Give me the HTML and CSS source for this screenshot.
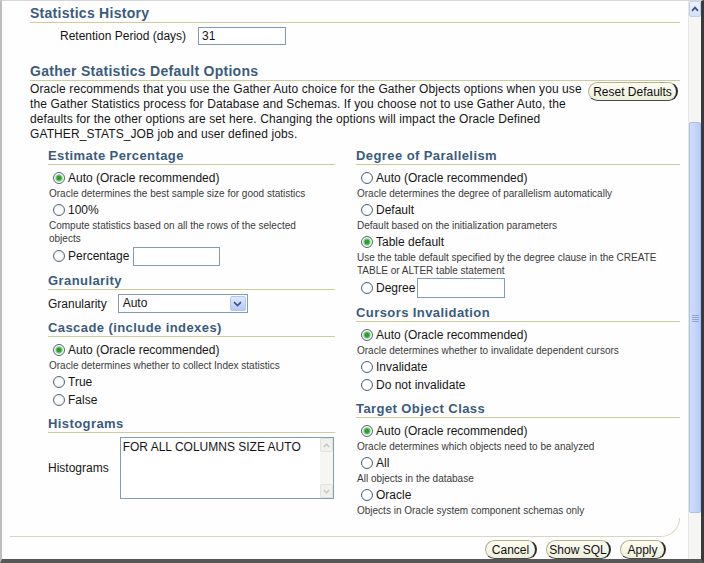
FILE: index.html
```html
<!DOCTYPE html>
<html>
<head>
<meta charset="utf-8">
<title>Gather Statistics Default Options</title>
<link rel="stylesheet" href="styles.css">
</head>
<body>
<div class="window">
  <main class="content">
    <h2 class="h1">Statistics History</h2>
    <div class="retention">
      <span>Retention Period (days)</span>
      <span class="textbox ret">31</span>
    </div>

    <h2 class="h1 second">Gather Statistics Default Options</h2>
    <div class="intro">
      <p>Oracle recommends that you use the Gather Auto choice for the Gather Objects options when you use<br>the Gather Statistics process for Database and Schemas. If you choose not to use Gather Auto, the<br>defaults for the other options are set here. Changing the options will impact the Oracle Defined<br>GATHER_STATS_JOB job and user defined jobs.</p>
      <button class="btn reset">Reset Defaults</button>
    </div>

    <div class="columns">
      <div class="col">
        <h3 class="h2 top">Estimate Percentage</h3>
        <label class="opt"><input class="radio" type="radio" name="est" checked>Auto (Oracle recommended)</label>
        <div class="desc">Oracle determines the best sample size for good statistics</div>
        <label class="opt"><input class="radio" type="radio" name="est">100%</label>
        <div class="desc">Compute statistics based on all the rows of the selected<br>objects</div>
        <div class="opt tall">
          <label class="opt-label"><input class="radio" type="radio" name="est">Percentage</label>
          <span class="textbox pct"></span>
        </div>

        <h3 class="h2">Granularity</h3>
        <div class="field-row">
          <span>Granularity</span>
          <div class="select">
            <span class="val">Auto</span>
            <span class="arrow"><svg width="9" height="6" viewBox="0 0 9 6"><path d="M1 1.2 L4.5 4.6 L8 1.2" stroke="#3f5a8a" stroke-width="1.8" fill="none"/></svg></span>
          </div>
        </div>

        <h3 class="h2">Cascade (include indexes)</h3>
        <label class="opt"><input class="radio" type="radio" name="cas" checked>Auto (Oracle recommended)</label>
        <div class="desc">Oracle determines whether to collect Index statistics</div>
        <label class="opt"><input class="radio" type="radio" name="cas">True</label>
        <label class="opt"><input class="radio" type="radio" name="cas">False</label>

        <h3 class="h2">Histograms</h3>
        <div class="hist-row">
          <span>Histograms</span>
          <div class="textarea">
            <span class="txt">FOR ALL COLUMNS SIZE AUTO</span>
            <span class="vsb">
              <span class="b"><svg width="7" height="5" viewBox="0 0 7 5"><path d="M0.8 4 L3.5 1.2 L6.2 4" stroke="#c4c4c4" stroke-width="1.3" fill="none"/></svg></span>
              <span class="b"><svg width="7" height="5" viewBox="0 0 7 5"><path d="M0.8 1 L3.5 3.8 L6.2 1" stroke="#c4c4c4" stroke-width="1.3" fill="none"/></svg></span>
            </span>
          </div>
        </div>
      </div>

      <div class="col">
        <h3 class="h2 top">Degree of Parallelism</h3>
        <label class="opt"><input class="radio" type="radio" name="dop">Auto (Oracle recommended)</label>
        <div class="desc">Oracle determines the degree of parallelism automatically</div>
        <label class="opt"><input class="radio" type="radio" name="dop">Default</label>
        <div class="desc">Default based on the initialization parameters</div>
        <label class="opt"><input class="radio" type="radio" name="dop" checked>Table default</label>
        <div class="desc">Use the table default specified by the degree clause in the CREATE<br>TABLE or ALTER table statement</div>
        <div class="opt tall2">
          <label class="opt-label"><input class="radio" type="radio" name="dop">Degree</label>
          <span class="textbox deg"></span>
        </div>

        <h3 class="h2">Cursors Invalidation</h3>
        <label class="opt"><input class="radio" type="radio" name="cur" checked>Auto (Oracle recommended)</label>
        <div class="desc">Oracle determines whether to invalidate dependent cursors</div>
        <label class="opt"><input class="radio" type="radio" name="cur">Invalidate</label>
        <label class="opt"><input class="radio" type="radio" name="cur">Do not invalidate</label>

        <h3 class="h2">Target Object Class</h3>
        <label class="opt"><input class="radio" type="radio" name="toc" checked>Auto (Oracle recommended)</label>
        <div class="desc">Oracle determines which objects need to be analyzed</div>
        <label class="opt"><input class="radio" type="radio" name="toc">All</label>
        <div class="desc">All objects in the database</div>
        <label class="opt"><input class="radio" type="radio" name="toc">Oracle</label>
        <div class="desc">Objects in Oracle system component schemas only</div>
      </div>
    </div>

    <div class="rule"></div>
    <div class="actions">
      <button class="btn cancel">Cancel</button>
      <button class="btn showsql">Show SQL</button>
      <button class="btn apply">Apply</button>
    </div>
  </main>

  <div class="scrollbar">
    <span class="sb-up"><svg width="8" height="6" viewBox="0 0 8 6"><path d="M1 4.8 L4 1.6 L7 4.8" stroke="#3f5278" stroke-width="1.7" fill="none"/></svg></span>
    <span class="sb-track"></span>
    <span class="sb-thumb"><svg width="7" height="8" viewBox="0 0 7 8"><path d="M0 1.5H7M0 3.5H7M0 5.5H7M0 7.5H7" stroke="#8fa6d8" stroke-width="1"/></svg></span>
    <span class="sb-rest"></span>
  </div>
</div>
</body>
</html>
```

FILE: styles.css
```css
* { box-sizing: border-box; }

html, body {
  margin: 0;
  padding: 0;
}

body {
  width: 704px;
  height: 563px;
  overflow: hidden;
  background: #fff;
  font-family: "Liberation Sans", Arial, sans-serif;
  font-size: 12px;
  color: #161616;
}

.window {
  display: flex;
  width: 704px;
  height: 563px;
  border-left: 2px solid #bdbdbd;
  border-top: 1px solid #d6d6d6;
  border-right: 3px solid #3a3a3a;
  border-bottom: 4px solid #575757;
  background: #fefefe;
}

.content {
  flex: 1;
  display: flex;
  flex-direction: column;
  padding: 4px 8px 0 28px;
  min-width: 0;
}

/* headings */
.h1 {
  margin: 0;
  font-size: 14px;
  line-height: 17px;
  font-weight: bold;
  letter-spacing: 0.27px;
  color: #3b5b7c;
  border-bottom: 1px solid #cccc9c;
}

.h1.second { margin-top: 18px; }

.h2 {
  margin: 7px 0 4px;
  font-size: 13px;
  line-height: 16px;
  font-weight: bold;
  letter-spacing: 0.42px;
  color: #3b5b7c;
  border-bottom: 1px solid #cccc9c;
}

.h2.top { margin-top: 6px; }

/* statistics history */
.retention {
  display: flex;
  align-items: center;
  gap: 12px;
  height: 19px;
  margin: 3px 0 0 30px;
}

.textbox {
  display: block;
  height: 19px;
  border: 1px solid #7f9db9;
  background: #fff;
  padding: 0 3px;
  line-height: 17px;
}

.textbox.ret { width: 88px; height: 18px; line-height: 16px; }
.textbox.pct { width: 87px; }
.textbox.deg { width: 88px; height: 20px; }

/* intro */
.intro {
  display: flex;
  align-items: flex-start;
  margin-top: 1px;
}

.intro p {
  margin: 0;
  line-height: 15px;
  letter-spacing: 0.09px;
  white-space: nowrap;
}

.btn {
  font-family: "Liberation Sans", Arial, sans-serif;
  font-size: 12px;
  color: #111;
  height: 19px;
  padding: 0;
  line-height: 16px;
  text-align: center;
  background: linear-gradient(#fcfcf4, #eeeedb);
  border: 1px solid #b5b08a;
  border-right: 2px solid #2a2a2a;
  border-bottom-color: #4a4a4a;
  border-radius: 10px;
}

.btn.reset { margin-left: auto; margin-right: 2px; width: 90px; }
.btn.cancel { width: 52px; }
.btn.showsql { width: 65px; }
.btn.apply { width: 46px; }

/* columns */
.columns {
  display: grid;
  grid-template-columns: 287px 324px;
  column-gap: 21px;
  align-items: start;
  margin-left: 18px;
}

.col {
  display: flex;
  flex-direction: column;
}

.opt {
  display: flex;
  align-items: center;
  height: 18px;
  padding-left: 5px;
}

.opt.tall { height: 20px; gap: 4px; }
.opt.tall2 { height: 20px; gap: 2px; }

.opt-label {
  display: flex;
  align-items: center;
}

.radio {
  -webkit-appearance: none;
  appearance: none;
  width: 12px;
  height: 12px;
  margin: 0 3px 0 0;
  border: 1px solid #51657b;
  border-radius: 50%;
  background: radial-gradient(circle, #ffffff 0 45%, #e2e2da 100%);
  flex: none;
}

.radio:checked {
  background: radial-gradient(circle, #2c9e2c 0 2px, #86cf86 3px, #ffffff 4.5px, #e2e2da 100%);
}

.desc {
  font-size: 10px;
  line-height: 13px;
  padding: 0 0 1px 1px;
  color: #3a3a3a;
}

.field-row {
  display: flex;
  align-items: center;
  gap: 11px;
}

.select {
  display: flex;
  width: 130px;
  height: 19px;
  border: 1px solid #7f9db9;
  background: #fff;
}

.select .val {
  flex: 1;
  padding-left: 4px;
  line-height: 17px;
}

.select .arrow {
  width: 16px;
  margin: 1px;
  display: flex;
  align-items: center;
  justify-content: center;
  background: linear-gradient(#dfe8fd, #b6caf8);
  border: 1px solid #b3c6f0;
  border-radius: 2px;
}

.hist-row {
  display: flex;
  align-items: center;
  gap: 11px;
}

.textarea {
  display: flex;
  width: 214px;
  height: 62px;
  border: 1px solid #7f9db9;
  background: #fff;
}

.textarea .txt {
  flex: 1;
  padding: 2px 2px;
  line-height: 14px;
}

.textarea .vsb {
  width: 13px;
  display: flex;
  flex-direction: column;
  justify-content: space-between;
  background: #f6f6f3;
}

.vsb .b {
  height: 14px;
  display: flex;
  align-items: center;
  justify-content: center;
  background: #f0f0ec;
  border: 1px solid #e2e2de;
  border-radius: 2px;
}

/* footer */
.rule {
  height: 19px;
  margin-left: -20px;
  border-bottom: 1px solid #d9d5be;
  border-right: 1px solid #d9d5be;
  border-bottom-right-radius: 22px;
}

.actions {
  display: flex;
  justify-content: flex-end;
  gap: 9px;
  margin: 3px 14px 0 0;
}

/* window scrollbar */
.scrollbar {
  width: 13px;
  display: flex;
  flex-direction: column;
  background: #f5f5f3;
  border-left: 1px solid #e6e6e6;
}

.sb-up {
  height: 16px;
  display: flex;
  align-items: center;
  justify-content: center;
  background: linear-gradient(#eef2fd, #d2defa);
  border: 1px solid #c2d0f0;
  border-radius: 2px;
}

.sb-track { height: 105px; }

.sb-thumb {
  height: 391px;
  display: flex;
  align-items: center;
  justify-content: center;
  background: linear-gradient(90deg, #d2defd, #b9ccf8);
  border: 1px solid #a9bfee;
  border-radius: 2px;
}

.sb-rest { flex: 1; }
```
